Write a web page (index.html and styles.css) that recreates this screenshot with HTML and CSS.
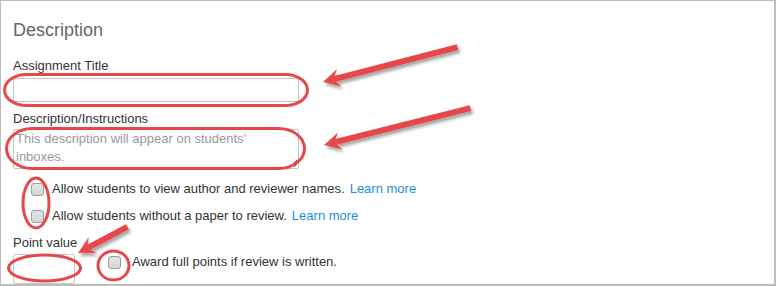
FILE: index.html
```html
<!DOCTYPE html>
<html>
<head>
<meta charset="utf-8">
<link rel="stylesheet" href="styles.css">
</head>
<body>
<div class="frame">
  <h2 class="title">Description</h2>
  <label class="lbl">Assignment Title</label>
  <input class="field wide" type="text">
  <label class="lbl lbl-desc">Description/Instructions</label>
  <textarea class="field area" placeholder="This description will appear on students' inboxes."></textarea>
  <div class="checks">
    <label class="check"><input class="cb" type="checkbox"><span class="ctext">Allow students to view author and reviewer names.</span><a class="more" href="#">Learn more</a></label>
    <label class="check"><input class="cb" type="checkbox"><span class="ctext">Allow students without a paper to review.</span><a class="more" href="#">Learn more</a></label>
  </div>
  <label class="lbl lbl-points">Point value</label>
  <div class="points">
    <input class="field small" type="text">
    <label class="check check-award"><input class="cb" type="checkbox"><span class="ctext">Award full points if review is written.</span></label>
  </div>
</div>
<svg class="marks" width="776" height="286" viewBox="0 0 776 286">
  <defs>
    <filter id="sh" x="-20%" y="-50%" width="140%" height="200%">
      <feDropShadow dx="2" dy="3" stdDeviation="1.8" flood-color="#000" flood-opacity="0.35"/>
    </filter>
  </defs>
  <g fill="none" stroke="#e5474b" stroke-width="3">
    <rect x="4.5" y="74.5" width="303" height="31" rx="22" ry="15.5"/>
    <rect x="6.5" y="128.5" width="298" height="40" rx="26" ry="20"/>
    <ellipse cx="36" cy="203" rx="13" ry="25"/>
    <ellipse cx="44.5" cy="268" rx="36" ry="13"/>
    <ellipse cx="113.5" cy="265.5" rx="15.5" ry="14.5"/>
  </g>
  <g fill="#e5474b" filter="url(#sh)">
    <polygon transform="translate(323,82) rotate(-14.5)" points="0,0 17,-9 12.5,-3 139,-3 139,3 12.5,3 17,9"/>
    <polygon transform="translate(324,145) rotate(-14.1)" points="0,0 17,-9 12.5,-3 151,-3 151,3 12.5,3 17,9"/>
    <polygon transform="translate(78,253) rotate(-27.9)" points="0,0 17,-9 12.5,-3 56,-3 56,3 12.5,3 17,9"/>
  </g>
</svg>
</body>
</html>
```

FILE: styles.css
```css
html, body {
  margin: 0;
  padding: 0;
  background: #fff;
}
body {
  position: relative;
  width: 776px;
  height: 286px;
  overflow: hidden;
  font-family: "Liberation Sans", Arial, sans-serif;
  color: #333;
}
.frame {
  box-sizing: border-box;
  width: 776px;
  height: 286px;
  border-style: solid;
  border-color: #bdbdbd;
  border-width: 1px 2px 2px 1px;
  padding: 0 0 0 12px;
  display: flex;
  flex-direction: column;
  align-items: flex-start;
  overflow: hidden;
}
.title {
  margin: 19px 0 0 0;
  font-size: 18px;
  line-height: 20px;
  font-weight: normal;
  color: #666;
}
.lbl {
  display: block;
  margin-top: 18px;
  font-size: 13px;
  line-height: 15px;
  color: #333;
}
.lbl-desc {
  margin-top: 9px;
}
.lbl-points {
  margin-top: 9px;
}
.field {
  box-sizing: border-box;
  border: 1px solid #c6c6c6;
  border-radius: 2px;
  background: #fff;
  font-family: "Liberation Sans", Arial, sans-serif;
  font-size: 13px;
  color: #333;
  outline: none;
}
.wide {
  margin-top: 5px;
  width: 286px;
  height: 24px;
  padding: 0 2px;
}
.area {
  margin-top: 3px;
  width: 286px;
  height: 40px;
  padding: 0 2px;
  line-height: 18px;
  resize: both;
  overflow: auto;
}
.area::placeholder {
  color: #999;
}
.checks {
  margin-top: 10px;
  display: flex;
  flex-direction: column;
  gap: 7px;
}
.check {
  display: flex;
  align-items: center;
  font-size: 13px;
  line-height: 20px;
  color: #333;
}
.cb {
  appearance: none;
  -webkit-appearance: none;
  box-sizing: border-box;
  width: 13px;
  height: 13px;
  margin: 0 8px 0 18px;
  border: 1px solid #9c9c9c;
  border-radius: 3px;
  background: linear-gradient(#e4e4e4, #d6d6d6);
  flex: none;
}
.more {
  margin-left: 5px;
  color: #1a8fe3;
  text-decoration: none;
}
.points {
  margin-top: 4px;
  display: flex;
  align-items: flex-start;
}
.small {
  width: 62px;
  height: 30px;
  padding: 0 2px;
}
.check-award {
  align-items: flex-start;
  line-height: 15px;
}
.check-award .cb {
  margin: 2px 11px 0 33px;
}
.marks {
  position: absolute;
  left: 0;
  top: 0;
  pointer-events: none;
}
```
